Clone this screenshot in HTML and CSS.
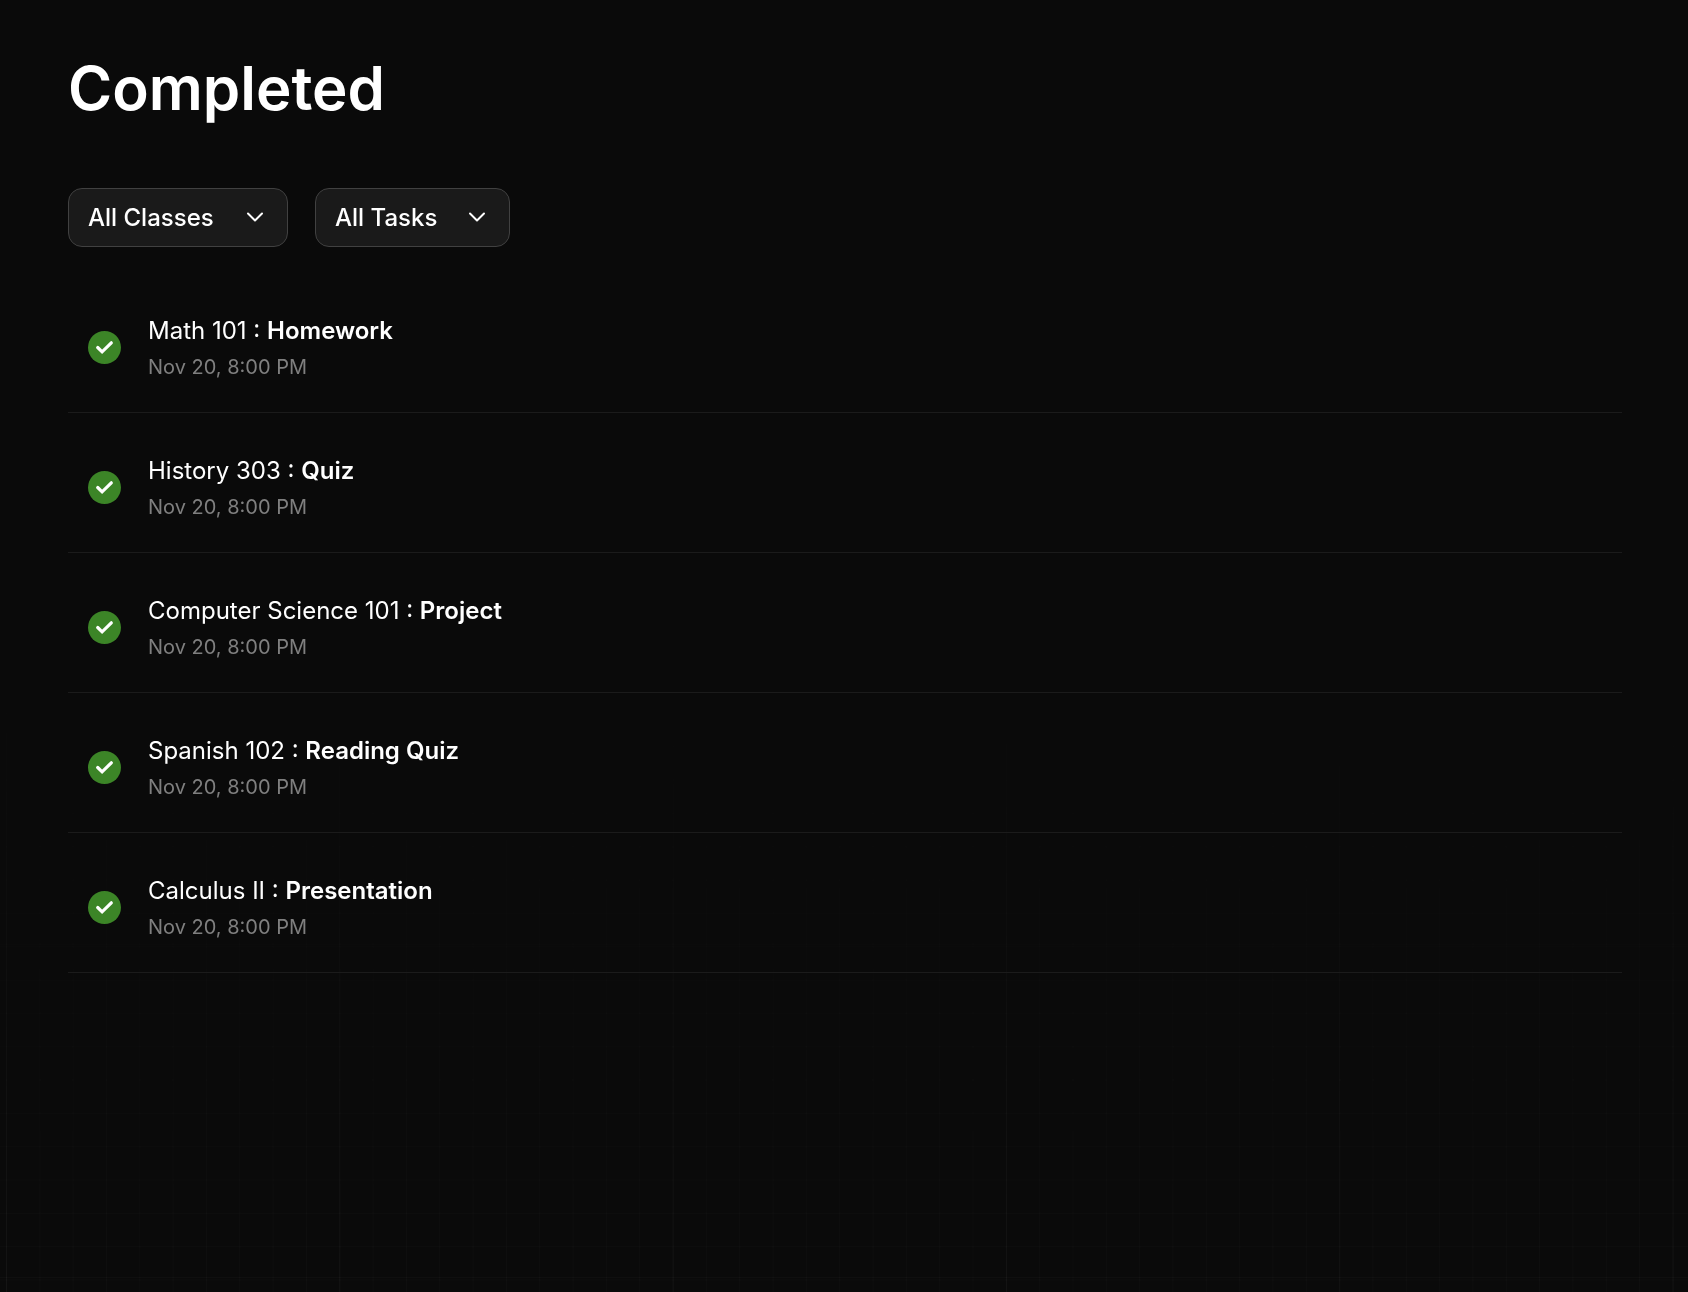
FILE: index.html
```html
<!DOCTYPE html>
<html lang="en">
<head>
<meta charset="utf-8">
<meta name="viewport" content="width=device-width, initial-scale=1">
<title>Completed</title>
<link rel="stylesheet" href="styles.css">
</head>
<body>
<svg class="sprite" aria-hidden="true">
  <symbol id="check" viewBox="0 0 33 33">
    <circle cx="16.5" cy="16.5" r="16.5" fill="#3c8527"/>
    <path d="M9.7 16.5l4.4 4.3 9.2-9" fill="none" stroke="#fff" stroke-width="3.2" stroke-linecap="round" stroke-linejoin="miter"/>
  </symbol>
  <symbol id="chevron" viewBox="0 0 18 18">
    <path d="M2 5.5l7 7 7-7" fill="none" stroke="#fff" stroke-width="2" stroke-linecap="round" stroke-linejoin="round"/>
  </symbol>
</svg>
<main class="page">
  <h1 class="heading">Completed</h1>
  <form class="filters">
    <div class="filter filter-classes">
      <select class="filter-select" aria-label="Class">
        <option>All Classes</option>
      </select>
      <svg class="filter-icon" aria-hidden="true"><use href="#chevron"/></svg>
    </div>
    <div class="filter filter-tasks">
      <select class="filter-select" aria-label="Task type">
        <option>All Tasks</option>
      </select>
      <svg class="filter-icon" aria-hidden="true"><use href="#chevron"/></svg>
    </div>
  </form>
  <ul class="tasks">
    <li class="task">
      <svg class="task-icon" role="img" aria-label="Done"><use href="#check"/></svg>
      <div class="task-text">
        <p class="task-title">Math 101 : <strong>Homework</strong></p>
        <p class="task-date">Nov 20, 8:00 PM</p>
      </div>
    </li>
    <li class="task">
      <svg class="task-icon" role="img" aria-label="Done"><use href="#check"/></svg>
      <div class="task-text">
        <p class="task-title">History 303 : <strong>Quiz</strong></p>
        <p class="task-date">Nov 20, 8:00 PM</p>
      </div>
    </li>
    <li class="task">
      <svg class="task-icon" role="img" aria-label="Done"><use href="#check"/></svg>
      <div class="task-text">
        <p class="task-title">Computer Science 101 : <strong>Project</strong></p>
        <p class="task-date">Nov 20, 8:00 PM</p>
      </div>
    </li>
    <li class="task">
      <svg class="task-icon" role="img" aria-label="Done"><use href="#check"/></svg>
      <div class="task-text">
        <p class="task-title">Spanish 102 : <strong>Reading Quiz</strong></p>
        <p class="task-date">Nov 20, 8:00 PM</p>
      </div>
    </li>
    <li class="task">
      <svg class="task-icon" role="img" aria-label="Done"><use href="#check"/></svg>
      <div class="task-text">
        <p class="task-title">Calculus II : <strong>Presentation</strong></p>
        <p class="task-date">Nov 20, 8:00 PM</p>
      </div>
    </li>
  </ul>
</main>
</body>
</html>
```
FILE: styles.css
```css
* {
  box-sizing: border-box;
  margin: 0;
  padding: 0;
}

body {
  min-height: 100vh;
  background: #0a0a0a;
  color: #fff;
  font-family: Inter, sans-serif;
}

/* Faint graph-paper grid, fading out towards the top */
body::before {
  content: "";
  position: fixed;
  inset: 0;
  z-index: -1;
  --minor: rgba(255, 255, 255, 0.018);
  --major: rgba(255, 255, 255, 0.024);
  background-image:
    linear-gradient(to right, var(--major) 1px, transparent 1px),
    linear-gradient(to top, var(--major) 1px, transparent 1px),
    linear-gradient(to right, var(--minor) 1px, transparent 1px),
    linear-gradient(to top, var(--minor) 1px, transparent 1px);
  background-size:
    calc(1000px / 3) 100%,
    100% calc(1000px / 3),
    calc(100px / 3) 100%,
    100% calc(100px / 3);
  background-position: left 6px bottom 14px;
  background-repeat: repeat;
  -webkit-mask-image: linear-gradient(to top, #000, transparent 50%);
  mask-image: linear-gradient(to top, #000, transparent 50%);
}

.sprite {
  position: absolute;
  width: 0;
  height: 0;
}

.page {
  padding: 56px 66px 64px 68px;
}

.heading {
  font-size: 60px;
  font-weight: 600;
  line-height: 64px;
}

.filters {
  display: flex;
  gap: 27px;
  margin-top: 68px;
}

.filter {
  position: relative;
}

.filter-classes {
  width: 220px;
}

.filter-tasks {
  width: 195px;
}

.filter-select {
  display: block;
  width: 100%;
  height: 59px;
  padding: 0 48px 0 19px;
  border: 1px solid #414141;
  border-radius: 14px;
  background: #1a1a1a;
  color: #fff;
  font: 500 24px/36px Inter, sans-serif;
  appearance: none;
}

.filter-icon {
  position: absolute;
  top: 20px;
  right: 24px;
  width: 18px;
  height: 18px;
  pointer-events: none;
}

.tasks {
  margin-top: 26px;
  list-style: none;
}

.task {
  display: flex;
  align-items: center;
  gap: 27px;
  padding: 40px 20px 30px;
  border-bottom: 1px solid #1b1b1b;
}

.task-icon {
  flex: none;
  width: 33px;
  height: 33px;
}

.task-text {
  display: grid;
  gap: 3px;
}

.task-title {
  font-size: 24px;
  font-weight: 400;
  line-height: 36px;
}

.task-title strong {
  font-weight: 600;
}

.task-date {
  color: #7f7f7f;
  font-size: 20px;
  line-height: 30px;
}
```
